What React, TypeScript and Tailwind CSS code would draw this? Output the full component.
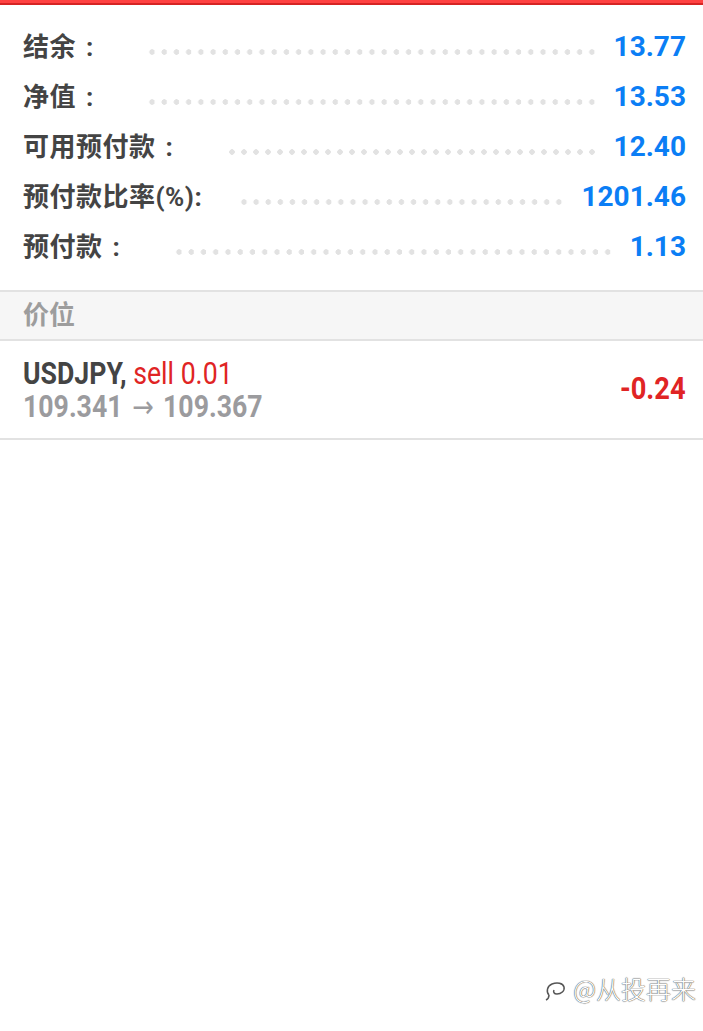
const summary = [
  { label: '结余', colon: true, value: '13.77' },
  { label: '净值', colon: true, value: '13.53' },
  { label: '可用预付款', colon: true, value: '12.40' },
  { label: '预付款比率(%):', colon: false, value: '1201.46' },
  { label: '预付款', colon: true, value: '1.13' },
];

const cjk = "font-['Roboto','Noto_Sans_CJK_SC',sans-serif]";

const SummaryRow = ({ label, colon, value }: { label: string; colon: boolean; value: string }) => (
  <div className="flex h-[50px] items-center">
    <span className={`${cjk} text-[26px] font-bold text-[#444444] tracking-[0.5px] whitespace-nowrap`}>
      {label}
      {colon && <span className="inline-block w-[28px] text-center">:</span>}
    </span>
    <div
      className={`${colon ? 'ml-[42px]' : 'ml-[36px]'} mr-[16px] mt-[10px] h-[6px] flex-1 bg-[radial-gradient(circle,#e2e2e2_2.5px,transparent_3px)] bg-[length:12px_6px] bg-repeat-space`}
    />
    <span className="font-['Roboto',sans-serif] text-[28px] font-bold text-[#0b7ef5]">{value}</span>
  </div>
);

const App = () => {
  return (
    <div className="relative min-h-[1031px] bg-white">
      <div className="h-[3px] bg-[#ff4242]" />
      <div className="h-[2px] bg-[#d62424]" />

      <div className="px-[23px] pr-[17px] pt-[17px] pb-[18px]">
        {summary.map((row) => (
          <SummaryRow key={row.label} label={row.label} colon={row.colon} value={row.value} />
        ))}
      </div>

      <div className="flex h-[51px] items-center border-y-2 border-[#e2e2e2] bg-[#f6f6f6] px-[23px]">
        <span className={`${cjk} text-[26px] font-bold text-[#9d9d9d]`}>价位</span>
      </div>

      <div className="flex h-[99px] items-center justify-between border-b-2 border-[#e2e2e2] pl-[23px] pr-[17px]">
        <div className="flex origin-left scale-x-[0.86] flex-col font-['Roboto',sans-serif] text-[31px] leading-[33px] whitespace-nowrap">
          <div>
            <span className="font-bold text-[#444444]">USDJPY,</span>{' '}
            <span className="text-[#e02424]">sell 0.01</span>
          </div>
          <div className="flex items-center font-bold text-[#9b9b9e]">
            <span>109.341</span>
            <span className="mx-[11px] font-['DejaVu_Sans',sans-serif] text-[30px] font-normal">→</span>
            <span>109.367</span>
          </div>
        </div>
        <span className="origin-right scale-x-[0.88] font-['Roboto',sans-serif] text-[31px] font-bold text-[#e02424]">
          -0.24
        </span>
      </div>

      <div className="absolute right-[7px] top-[970px] flex items-center gap-[3px] font-['Noto_Sans_CJK_SC',sans-serif] text-[25px] font-light text-white [text-shadow:0_0_1px_#444,0_0_1px_#444]">
        <svg width="28" height="28" viewBox="0 0 28 28" fill="none" stroke="#555" strokeWidth="1.5">
          <path d="M7 20c-3-3-2-9 3-11 5-2 11-1 12 3 1 4-3 7-7 7-3 0-4-2-3-4" />
          <path d="M4 25c2-1 3-3 3-5" />
        </svg>
        <span>@从投再来</span>
      </div>
    </div>
  );
};

export default App;
